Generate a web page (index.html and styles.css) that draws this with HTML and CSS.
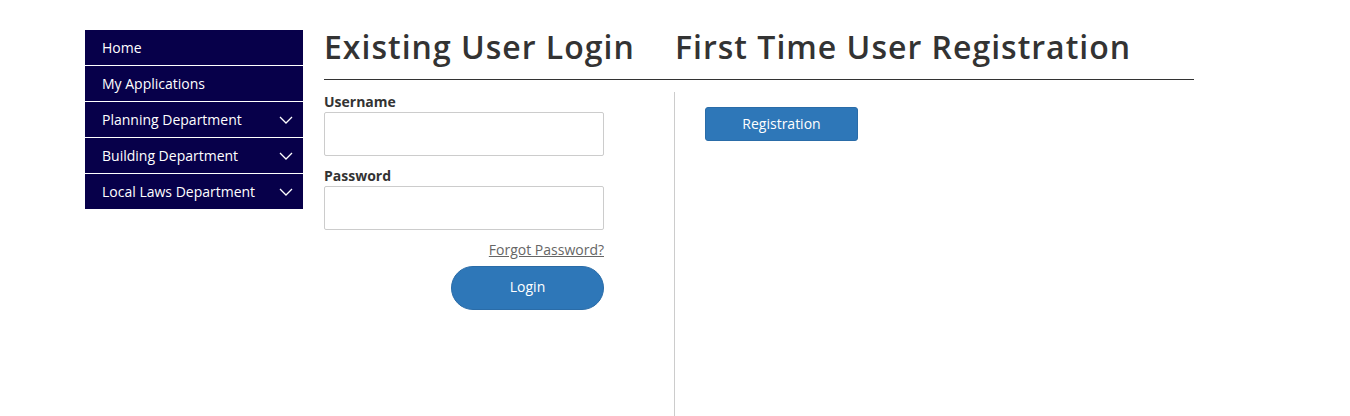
FILE: index.html
```html
<!DOCTYPE html>
<html lang="en">
<head>
    <meta charset="UTF-8">
    <meta name="viewport" content="width=device-width, initial-scale=1.0">
    <title>Login</title>
    <link rel="stylesheet" href="styles.css">
</head>
<body>
    <div id="page">
        <ul id="sideNav">
            <li><a href="#">Home</a></li>
            <li><a href="#">My Applications</a></li>
            <li class="hasSub"><a href="#">Planning Department</a>
                <svg class="chev" width="14" height="8" viewBox="0 0 14 8"><polyline points="1,1 7,7 13,1" /></svg>
            </li>
            <li class="hasSub"><a href="#">Building Department</a>
                <svg class="chev" width="14" height="8" viewBox="0 0 14 8"><polyline points="1,1 7,7 13,1" /></svg>
            </li>
            <li class="hasSub"><a href="#">Local Laws Department</a>
                <svg class="chev" width="14" height="8" viewBox="0 0 14 8"><polyline points="1,1 7,7 13,1" /></svg>
            </li>
        </ul>

        <div id="main">
            <div class="headRow">
                <h2 class="leftHead">Existing User Login</h2>
                <h2>First Time User Registration</h2>
            </div>
            <div class="cols">
                <form class="loginCol">
                    <div class="field">
                        <label for="username">Username</label>
                        <input type="text" id="username">
                    </div>
                    <div class="field">
                        <label for="password">Password</label>
                        <input type="password" id="password">
                    </div>
                    <div class="forgot"><a href="#">Forgot Password?</a></div>
                    <div class="loginRow">
                        <button type="button" class="loginBtn">Login</button>
                    </div>
                </form>
                <div class="regCol">
                    <button type="button" class="regBtn">Registration</button>
                </div>
            </div>
        </div>
    </div>
</body>
</html>
```

FILE: styles.css
```css
body {
    margin: 0;
    font-family: "Open Sans", "Liberation Sans", sans-serif;
    color: #333;
    background: #fff;
}
#page {
    display: flex;
    align-items: flex-start;
    gap: 21px;
    padding: 25px 0 0 85px;
}
#sideNav {
    width: 218px;
    margin: 5px 0 0 0;
    padding: 0;
    list-style: none;
    background: #07004a;
}
#sideNav li {
    display: flex;
    align-items: center;
    justify-content: space-between;
    height: 35px;
    padding: 0 10px 0 17px;
    border-bottom: 1px solid #fff;
}
#sideNav li:last-child {
    border-bottom: none;
}
#sideNav a {
    color: #fff;
    text-decoration: none;
    font-size: 14px;
    line-height: 35px;
}
.chev polyline {
    fill: none;
    stroke: #fff;
    stroke-width: 1.3;
}
#main {
    width: 870px;
}
.headRow {
    display: flex;
    border-bottom: 1px solid #333;
    padding-bottom: 10px;
}
.headRow h2 {
    margin: 0;
    font-size: 32px;
    font-weight: 600;
    letter-spacing: 1px;
    line-height: 44px;
    color: #333;
}
.leftHead {
    width: 351px;
}
.cols {
    display: flex;
    margin-top: 12px;
}
.loginCol {
    width: 351px;
    box-sizing: border-box;
    min-height: 330px;
    padding-right: 70px;
    border-right: 1px solid #ccc;
    margin: 0;
}
.field {
    margin-bottom: 10px;
}
.field label {
    display: block;
    font-size: 14px;
    font-weight: 700;
    line-height: 20px;
}
.field input {
    display: block;
    width: 280px;
    height: 44px;
    box-sizing: border-box;
    border: 1px solid #ccc;
    border-radius: 2px;
    padding: 0 10px;
    font-family: inherit;
    font-size: 14px;
}
.forgot {
    text-align: right;
    font-size: 14px;
    line-height: 20px;
}
.forgot a {
    color: #666;
}
.loginRow {
    display: flex;
    justify-content: flex-end;
    margin-top: 6px;
}
.loginBtn {
    width: 153px;
    height: 44px;
    padding: 0 0 4px 0;
    border: 1px solid #2a6ca8;
    border-radius: 22px;
    background: #2e77b8;
    color: #fff;
    font-family: inherit;
    font-size: 14px;
}
.regCol {
    padding: 15px 0 0 30px;
}
.regBtn {
    width: 153px;
    height: 34px;
    padding: 0 0 2px 0;
    border: 1px solid #2a6ca8;
    border-radius: 3px;
    background: #2e77b8;
    color: #fff;
    font-family: inherit;
    font-size: 14px;
}
```
